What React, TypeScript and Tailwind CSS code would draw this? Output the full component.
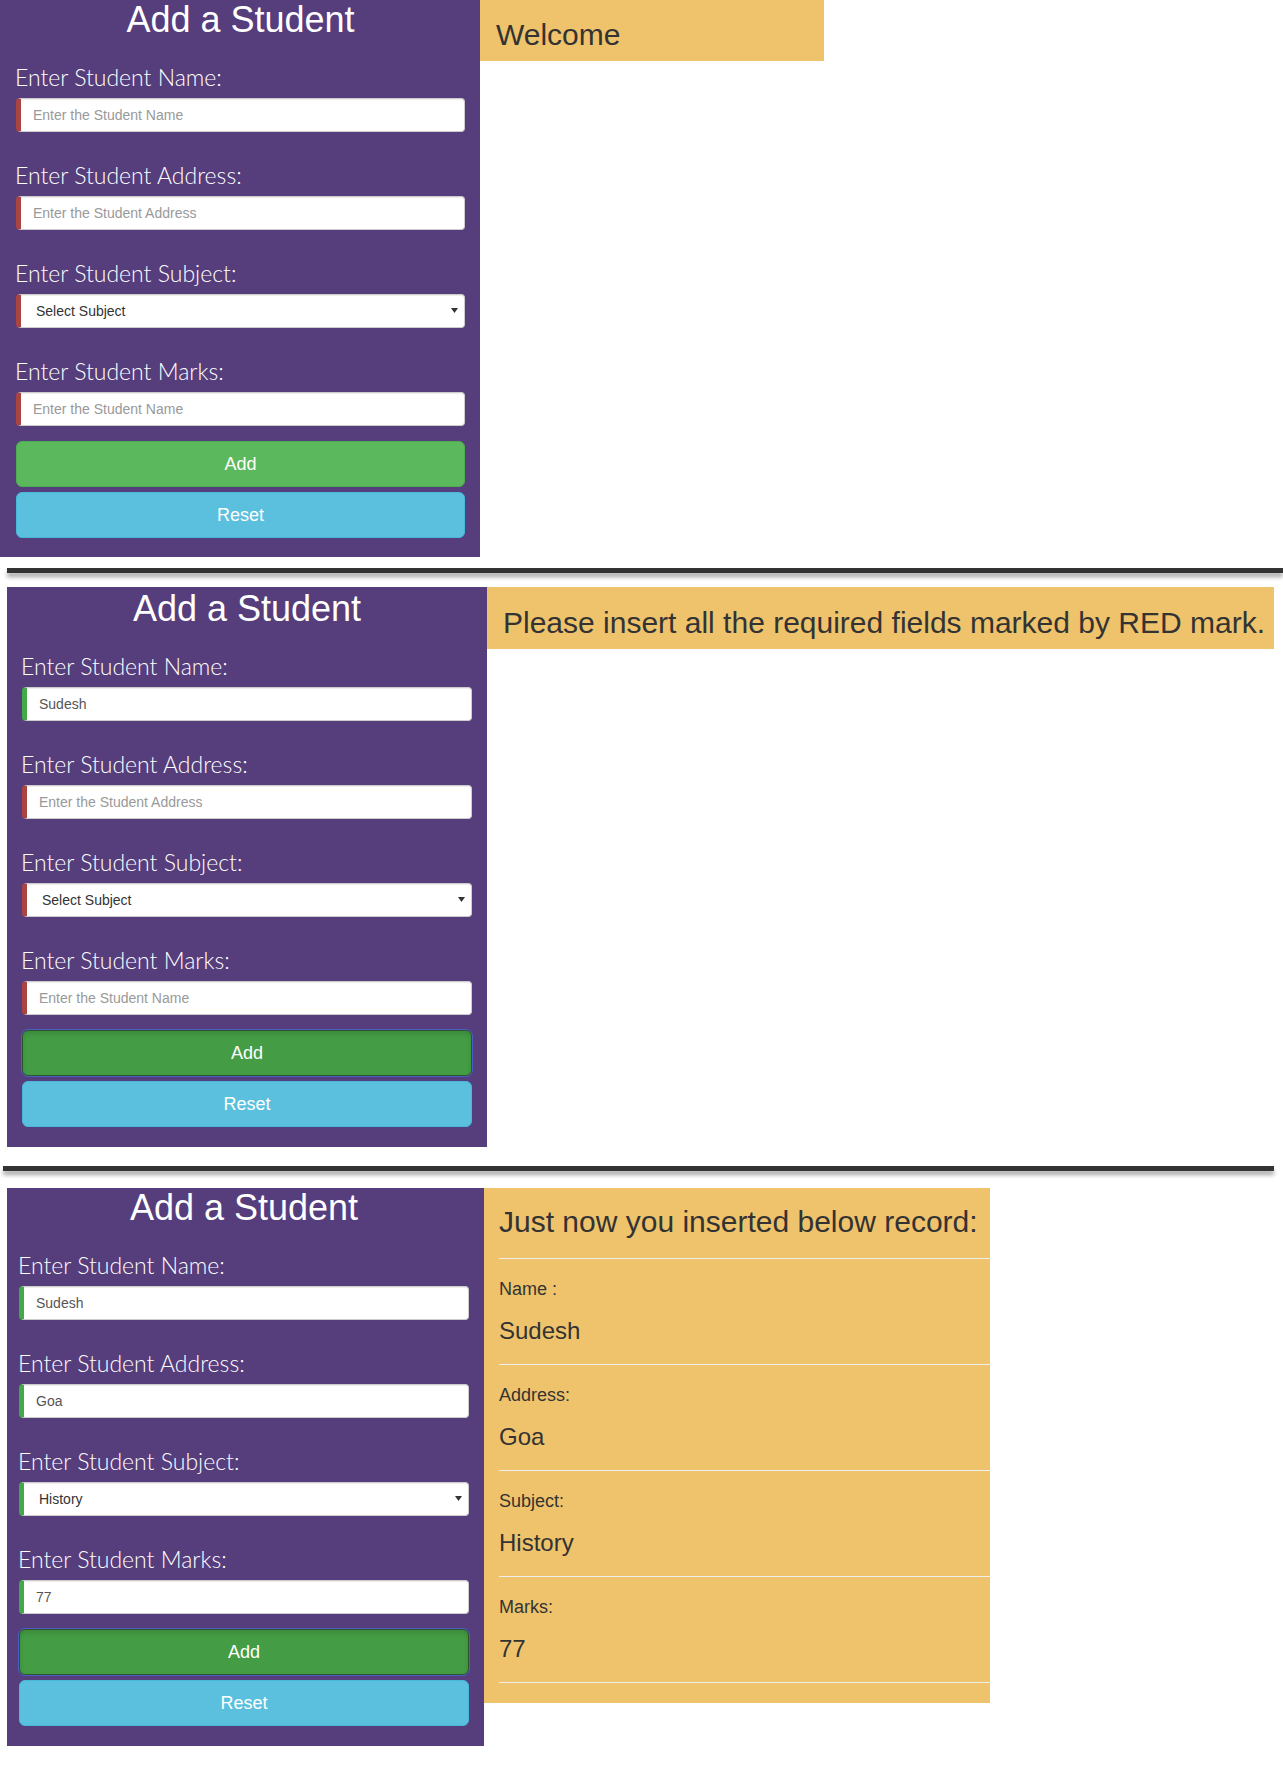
import React from "react";

type Field = {
  label: string;
  placeholder: string;
  value?: string;
  select?: boolean;
};

const emptyForm: Field[] = [
  { label: "Enter Student Name:", placeholder: "Enter the Student Name" },
  { label: "Enter Student Address:", placeholder: "Enter the Student Address" },
  { label: "Enter Student Subject:", placeholder: "Select Subject", select: true },
  { label: "Enter Student Marks:", placeholder: "Enter the Student Name" },
];

const partialForm: Field[] = [
  { label: "Enter Student Name:", placeholder: "Enter the Student Name", value: "Sudesh" },
  { label: "Enter Student Address:", placeholder: "Enter the Student Address" },
  { label: "Enter Student Subject:", placeholder: "Select Subject", select: true },
  { label: "Enter Student Marks:", placeholder: "Enter the Student Name" },
];

const fullForm: Field[] = [
  { label: "Enter Student Name:", placeholder: "Enter the Student Name", value: "Sudesh" },
  { label: "Enter Student Address:", placeholder: "Enter the Student Address", value: "Goa" },
  { label: "Enter Student Subject:", placeholder: "Select Subject", value: "History", select: true },
  { label: "Enter Student Marks:", placeholder: "Enter the Student Name", value: "77" },
];

const record = [
  { label: "Name :", value: "Sudesh" },
  { label: "Address:", value: "Goa" },
  { label: "Subject:", value: "History" },
  { label: "Marks:", value: "77" },
];

function FormField({ field, first }: { field: Field; first: boolean }) {
  const valid = !!field.value;
  const edge = valid
    ? "border-l-[#42a948]"
    : "border-l-[#a94442]";
  return (
    <div className={first ? "mt-[20px]" : "mt-[26px]"}>
      <label className="mb-[4px] -ml-px block h-[34px] font-['Segoe_UI',Lato,sans-serif] text-[23px] leading-[34px] font-light text-white">
        {field.label}
      </label>
      {field.select ? (
        <div className="relative">
          <select
            defaultValue={field.value ?? ""}
            className={`block h-[34px] w-full appearance-none rounded-[4px] border border-[#ccc] border-l-[5px] ${edge} bg-white pl-[15px] font-['Liberation_Sans',Arial,sans-serif] text-[14px] text-[#333] shadow-[inset_0_1px_1px_rgba(0,0,0,0.075)] outline-none`}
          >
            <option value="">Select Subject</option>
            <option value="History">History</option>
            <option value="Maths">Maths</option>
          </select>
          <svg
            className="pointer-events-none absolute right-[7px] top-[14px]"
            width="7"
            height="5"
            viewBox="0 0 7 5"
          >
            <polygon points="0,0 7,0 3.5,5" fill="#333" />
          </svg>
        </div>
      ) : (
        <input
          readOnly
          defaultValue={field.value}
          placeholder={field.placeholder}
          className={`block h-[34px] w-full rounded-[4px] border border-[#ccc] border-l-[5px] ${edge} bg-white px-[12px] font-['Liberation_Sans',Arial,sans-serif] text-[14px] text-[#555] shadow-[inset_0_1px_1px_rgba(0,0,0,0.075)] outline-none placeholder:text-[#999]`}
        />
      )}
    </div>
  );
}

function StudentForm({
  fields,
  pressed,
  className,
}: {
  fields: Field[];
  pressed: boolean;
  className: string;
}) {
  return (
    <div className={`shrink-0 bg-[#563d7c] ${className}`}>
      <h1 className="h-[40px] text-center font-['Liberation_Sans',Arial,sans-serif] text-[36px] leading-[40px] text-white">
        Add a Student
      </h1>
      {fields.map((f, i) => (
        <FormField key={f.label} field={f} first={i === 0} />
      ))}
      <button
        className={
          pressed
            ? "mt-[15px] block h-[46px] w-full rounded-[6px] border border-[#2b542c] bg-[#449d44] font-['Liberation_Sans',Arial,sans-serif] text-[18px] text-white shadow-[inset_0_3px_5px_rgba(0,0,0,0.125)] outline outline-1 outline-[#4a5fc1]"
            : "mt-[15px] block h-[46px] w-full rounded-[6px] border border-[#4cae4c] bg-[#5cb85c] font-['Liberation_Sans',Arial,sans-serif] text-[18px] text-white"
        }
      >
        Add
      </button>
      <button className="mt-[5px] block h-[46px] w-full rounded-[6px] border border-[#46b8da] bg-[#5bc0de] font-['Liberation_Sans',Arial,sans-serif] text-[18px] text-white">
        Reset
      </button>
    </div>
  );
}

function Separator({ className }: { className: string }) {
  return (
    <div
      className={`h-[5px] bg-[#333] shadow-[0_4px_4px_rgba(0,0,0,0.35)] ${className}`}
    />
  );
}

export default function App() {
  return (
    <div className="min-h-[1775px] w-[1283px] bg-white font-['Liberation_Sans',Arial,sans-serif] text-[#333]">
      {/* first screen: empty form */}
      <div className="flex items-start">
        <StudentForm
          fields={emptyForm}
          pressed={false}
          className="w-[480px] pl-[16px] pr-[15px] pb-[19px]"
        />
        <div className="w-[344px] bg-[#efc36c] pl-[16px] pt-[18px] pb-[10px]">
          <h2 className="text-[30px] leading-[33px]">Welcome</h2>
        </div>
      </div>

      <Separator className="ml-[7px] mt-[11px] mb-[14px] w-[1276px]" />

      {/* second screen: validation message */}
      <div className="ml-[7px] flex items-start">
        <StudentForm
          fields={partialForm}
          pressed
          className="w-[480px] px-[15px] pt-[2px] pb-[20px]"
        />
        <div className="w-[787px] bg-[#efc36c] pl-[16px] pt-[19px] pb-[10px]">
          <h2 className="text-[30px] leading-[33px]">
            Please insert all the required fields marked by RED mark.
          </h2>
        </div>
      </div>

      <Separator className="ml-[3px] mt-[19px] mb-[17px] w-[1271px]" />

      {/* third screen: inserted record */}
      <div className="ml-[7px] flex items-start">
        <StudentForm
          fields={fullForm}
          pressed
          className="w-[477px] pl-[12px] pr-[15px] pb-[20px]"
        />
        <div className="w-[506px] bg-[#efc36c] pl-[15px] pt-[17px] pb-[20px]">
          <h2 className="text-[30px] leading-[33px]">Just now you inserted below record:</h2>
          <hr className="mt-[20px] border-[#eee]" />
          {record.map((r) => (
            <div key={r.label}>
              <h4 className="mt-[20px] text-[18px] leading-[20px]">{r.label}</h4>
              <h3 className="mt-[19px] text-[24px] leading-[26px]">{r.value}</h3>
              <hr className="mt-[20px] border-[#eee]" />
            </div>
          ))}
        </div>
      </div>
    </div>
  );
}
